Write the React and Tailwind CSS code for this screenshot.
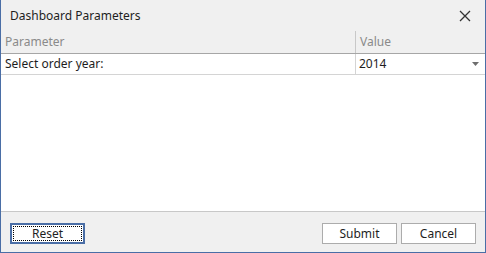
import React from 'react';

export default function App() {
  return (
    <div className="w-[486px] h-[253px] flex flex-col bg-[#f0f0f0] border-x border-b border-[#4a6ea6] text-[12px] text-[#1e1e1e] font-['Noto_Sans',sans-serif] leading-none select-none">
      {/* title bar */}
      <div className="h-[31px] flex items-center justify-between pl-[9px] pr-[14px] shrink-0">
        <span className="pt-[1px]">Dashboard Parameters</span>
        <svg width="12" height="12" viewBox="0 0 12 12" className="text-[#333]">
          <path d="M1 1 L11 11 M11 1 L1 11" stroke="currentColor" strokeWidth="1.3" />
        </svg>
      </div>

      {/* grid */}
      <div className="flex-1 flex flex-col bg-white">
        <div className="h-[23px] flex bg-[#f0f0f0] border-b border-[#a6a6a6] text-[#8a8a8a] shrink-0">
          <div className="w-[354px] flex items-center pl-[4px]">Parameter</div>
          <div className="flex-1 flex items-center pl-[4px] border-l border-[#c8c8c8]">Value</div>
        </div>
        <div className="h-[21px] flex border-b border-[#d4d4d4] shrink-0">
          <div className="w-[354px] flex items-center pl-[4px]">Select order year:</div>
          <div className="flex-1 flex items-center justify-between pl-[3px] pr-[6px] border-l border-[#d4d4d4]">
            <span>2014</span>
            <svg width="7" height="4" viewBox="0 0 7 4">
              <path d="M0 0 H7 L3.5 4 Z" fill="#6e6e6e" />
            </svg>
          </div>
        </div>
      </div>

      {/* footer */}
      <div className="h-[41px] shrink-0 border-t border-[#c8c8c8] flex items-start pt-[11px] pl-[9px] pr-[9px]">
        <button className="w-[75px] h-[21px] bg-white border-2 border-[#4a6ea6] p-[1px] flex">
          <span className="flex-1 flex items-center justify-center border border-dotted border-black">Reset</span>
        </button>
        <div className="ml-auto flex gap-[4px]">
          <button className="w-[75px] h-[21px] bg-white border border-[#acacac] flex items-center justify-center">Submit</button>
          <button className="w-[75px] h-[21px] bg-white border border-[#acacac] flex items-center justify-center">Cancel</button>
        </div>
      </div>
    </div>
  );
}
